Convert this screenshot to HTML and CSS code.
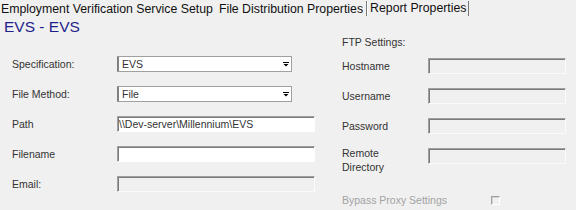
FILE: index.html
```html
<!DOCTYPE html>
<html lang="en">
<head>
  <meta charset="UTF-8" />
  <title>File Distribution Properties</title>
  <link rel="stylesheet" href="styles.css">
</head>
<body>
  <div class="tabs">
    <span class="tab tab-first">Employment Verification Service Setup</span>
    <span class="tab tab-active">File Distribution Properties</span>
    <span class="tab tab-boxed">Report Properties</span>
  </div>
  <h1 class="title">EVS - EVS</h1>

  <div class="panel">
    <div class="col-left">
      <div class="row">
        <label class="label">Specification:</label>
        <div class="select">
          <span>EVS</span>
          <svg class="arrow" width="6" height="5" viewBox="0 0 6 5"><rect x="0" y="0" width="6" height="1" fill="#000"/><polygon points="0.5,2 5.5,2 3,4.5" fill="#000"/></svg>
        </div>
      </div>
      <div class="row">
        <label class="label">File Method:</label>
        <div class="select">
          <span>File</span>
          <svg class="arrow" width="6" height="5" viewBox="0 0 6 5"><rect x="0" y="0" width="6" height="1" fill="#000"/><polygon points="0.5,2 5.5,2 3,4.5" fill="#000"/></svg>
        </div>
      </div>
      <div class="row row-path">
        <label class="label">Path</label>
        <div class="input input-wide">\\Dev-server\Millennium\EVS</div>
      </div>
      <div class="row">
        <label class="label">Filename</label>
        <div class="input input-wide"></div>
      </div>
      <div class="row">
        <label class="label">Email:</label>
        <div class="input input-wide input-disabled"></div>
      </div>
    </div>

    <div class="col-right">
      <div class="group-title">FTP Settings:</div>
      <div class="ftp-row">
        <label class="label ftp-label">Hostname</label>
        <div class="input input-disabled"></div>
      </div>
      <div class="ftp-row">
        <label class="label ftp-label">Username</label>
        <div class="input input-disabled"></div>
      </div>
      <div class="ftp-row">
        <label class="label ftp-label">Password</label>
        <div class="input input-disabled"></div>
      </div>
      <div class="ftp-row">
        <label class="label ftp-label ftp-label-two">Remote<br>Directory</label>
        <div class="input input-disabled"></div>
      </div>
      <div class="bypass">
        <span class="bypass-text">Bypass Proxy Settings</span>
        <span class="check"></span>
      </div>
    </div>
  </div>
</body>
</html>
```

FILE: styles.css
```css
body {
  margin: 0;
  background: #f0f0f0;
  font-family: "Liberation Sans", Arial, sans-serif;
  color: #333;
}
.tabs {
  display: flex;
  height: 18px;
  font-size: 12.3px;
  line-height: 18px;
  color: #111;
}
.tab {
  white-space: nowrap;
}
.tab-first {
  margin-left: 1px;
}
.tab-active {
  margin-left: 6px;
  padding-right: 3px;
}
.tab-boxed {
  padding: 0 2px 0 3px;
  margin-top: 1px;
  height: 15px;
  line-height: 15px;
  border-left: 1px solid #777;
  border-right: 1px solid #777;
  box-shadow: inset 1px 0 0 #fff;
}
.title {
  margin: 0 0 0 4px;
  height: 18px;
  font-size: 15.5px;
  line-height: 18px;
  font-weight: normal;
  color: #1f1f8c;
}
.panel {
  display: flex;
}
.col-left {
  width: 342px;
  box-sizing: border-box;
  padding: 20px 0 0 12px;
}
.row {
  display: grid;
  grid-template-columns: 105px auto;
  align-items: center;
  height: 16px;
  margin-bottom: 14px;
}
.row-path {
  margin-top: 2px;
}
.label {
  font-size: 10.5px;
  line-height: 14px;
  white-space: nowrap;
}
.select {
  width: 175px;
  height: 16px;
  box-sizing: border-box;
  background: #fff;
  border: 1px solid #a0a0a0;
  border-left-color: #808080;
  box-shadow: inset 1px 0 0 #808080;
  display: flex;
  align-items: center;
  justify-content: space-between;
  padding: 0 2px 0 4px;
  font-size: 10.5px;
}
.arrow {
  display: block;
}
.input {
  width: 138px;
  height: 16px;
  box-sizing: border-box;
  background: #fff;
  border-top: 1px solid #a0a0a0;
  border-left: 1px solid #a0a0a0;
  border-right: 1px solid #fff;
  border-bottom: 1px solid #fff;
  box-shadow: inset 1px 1px 0 #7a7a7a;
  font-size: 10.5px;
  line-height: 14px;
  padding-left: 1px;
  white-space: nowrap;
  overflow: hidden;
}
.input-wide {
  width: 198px;
}
.input-disabled {
  background: #f0f0f0;
  border-right-color: #fafafa;
  border-bottom-color: #fafafa;
}
.group-title {
  font-size: 10.5px;
  line-height: 13px;
  margin-bottom: 9px;
}
.ftp-row {
  display: grid;
  grid-template-columns: 86px 138px;
  align-items: start;
  min-height: 16px;
  margin-bottom: 14px;
}
.ftp-label {
  margin-top: 1px;
}
.ftp-label-two {
  margin-top: -2px;
}
.bypass {
  display: flex;
  align-items: center;
  margin-top: 19px;
  height: 14px;
}
.bypass-text {
  width: 149px;
  font-size: 10.5px;
  line-height: 14px;
  color: #a3a3a3;
}
.check {
  width: 9px;
  height: 9px;
  box-sizing: border-box;
  border-top: 1px solid #a0a0a0;
  border-left: 1px solid #a0a0a0;
  border-right: 1px solid #fff;
  border-bottom: 1px solid #fff;
  box-shadow: inset 1px 1px 0 #d4d4d4;
}
```
